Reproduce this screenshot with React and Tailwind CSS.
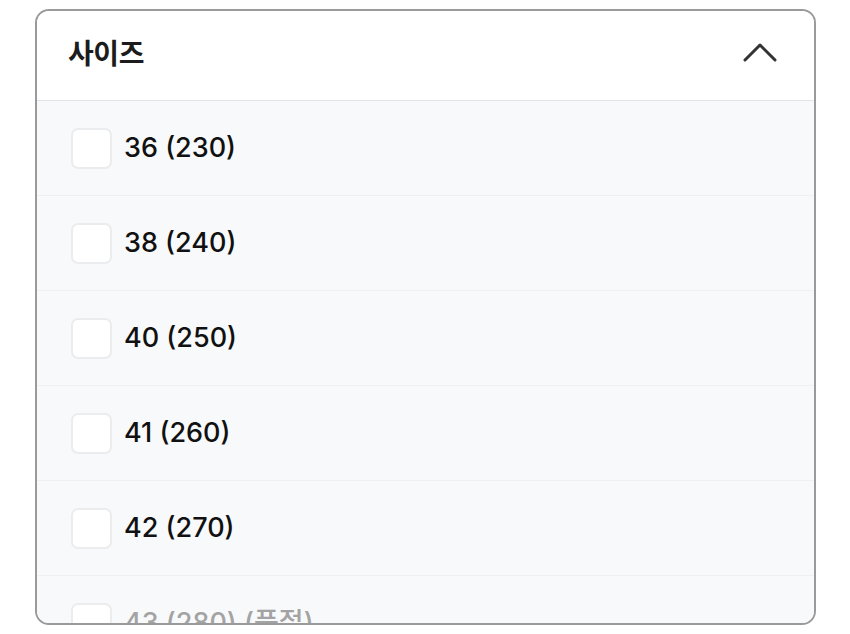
import React from 'react';

const SIZES = [
  { label: '36 (230)' },
  { label: '38 (240)' },
  { label: '40 (250)' },
  { label: '41 (260)' },
  { label: '42 (270)' },
  { label: '43 (280) (품절)', soldOut: true },
  { label: '44 (290)' },
];

const FONT = { fontFamily: 'Inter, "Noto Sans CJK KR", sans-serif' };

export default function App() {
  return (
    <div className="w-[850px] h-[634px] bg-white pt-[9px] pl-[35px]" style={FONT}>
      <div className="w-[781px] h-[616px] border-2 border-[#9a9a9a] rounded-[14px] overflow-hidden flex flex-col">
        {/* header */}
        <div className="h-[90px] shrink-0 flex items-center justify-between pl-[31px] pr-[37px] pb-[7px] border-b border-[#e3e4e6] bg-white">
          <h2 className="text-[28px] font-bold text-[#1c1c1c] tracking-[-0.4px]" style={{ fontFamily: '"Noto Sans CJK KR", sans-serif' }}>
            사이즈
          </h2>
          <svg width="34" height="22" viewBox="0 0 34 22" fill="none">
            <path d="M2 19 L17 4 L32 19" stroke="#333" strokeWidth="3" strokeLinecap="round" strokeLinejoin="round" />
          </svg>
        </div>

        {/* options */}
        <div className="flex-1 overflow-hidden bg-[#f8f9fb]">
          {SIZES.map((s) => (
            <label key={s.label} className="h-[95px] flex items-center gap-[12px] pl-[34px] border-b border-[#eff0f2]">
              <span className="w-[41px] h-[41px] rounded-[7px] border-2 border-[#ebecee] bg-white shrink-0" />
              <span className={`text-[27px] font-medium tracking-[0px] ${s.soldOut ? 'text-[#a3a3a3]' : 'text-[#111]'}`}>
                {s.label}
              </span>
            </label>
          ))}
        </div>
      </div>
    </div>
  );
}
